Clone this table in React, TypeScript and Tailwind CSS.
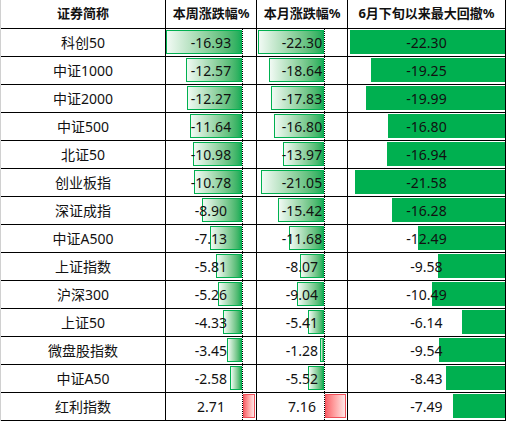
import React from "react";

type Row = { name: string; w: number; m: number; d: number };

const rows: Row[] = [
  { name: "科创50", w: -16.93, m: -22.3, d: -22.3 },
  { name: "中证1000", w: -12.57, m: -18.64, d: -19.25 },
  { name: "中证2000", w: -12.27, m: -17.83, d: -19.99 },
  { name: "中证500", w: -11.64, m: -16.8, d: -16.8 },
  { name: "北证50", w: -10.98, m: -13.97, d: -16.94 },
  { name: "创业板指", w: -10.78, m: -21.05, d: -21.58 },
  { name: "深证成指", w: -8.9, m: -15.42, d: -16.28 },
  { name: "中证A500", w: -7.13, m: -11.68, d: -12.49 },
  { name: "上证指数", w: -5.81, m: -8.07, d: -9.58 },
  { name: "沪深300", w: -5.26, m: -9.04, d: -10.49 },
  { name: "上证50", w: -4.33, m: -5.41, d: -6.14 },
  { name: "微盘股指数", w: -3.45, m: -1.28, d: -9.54 },
  { name: "中证A50", w: -2.58, m: -5.52, d: -8.43 },
  { name: "红利指数", w: 2.71, m: 7.16, d: -7.49 },
];

function AxisBarCell({ v, axis, scale }: { v: number; axis: number; scale: number }) {
  const len = Math.abs(v) * scale;
  const neg = v < 0;
  return (
    <div className="relative h-[28px] border-r border-b border-black flex items-center justify-center">
      {neg ? (
        <div
          className="absolute top-[1px] bottom-[2px] border border-[#00b050] bg-linear-to-r from-[#f1faf4] to-[#12ad58]"
          style={{ left: axis - len, width: len }}
        />
      ) : (
        <div
          className="absolute top-[1px] bottom-[2px] border border-[#f0505a] bg-linear-to-r from-[#f7636b] to-[#ffe6e7]"
          style={{ left: axis + 1, width: len }}
        />
      )}
      <div
        className="absolute top-0 bottom-0 border-l border-dotted border-black"
        style={{ left: axis }}
      />
      <span className="relative">{v.toFixed(2)}</span>
    </div>
  );
}

function SolidBarCell({ v, scale }: { v: number; scale: number }) {
  const len = Math.abs(v) * scale;
  return (
    <div className="relative h-[28px] border-r border-b border-black flex items-center justify-center">
      <div className="absolute top-[1px] bottom-[2px] right-0 bg-[#00b050]" style={{ width: len }} />
      <span className="relative">{v.toFixed(2)}</span>
    </div>
  );
}

export default function App() {
  const head = "h-[29px] border-r border-b border-black flex items-center justify-center font-bold text-[13px]";
  return (
    <div className="bg-white w-[507px] h-[421px] font-['Noto_Sans','Noto_Sans_CJK_SC',sans-serif] text-[14px] text-[#111]">
      <div className="grid grid-cols-[165px_91px_91px_158px] w-[506px] border-l border-[#d0d0d0]">
        <div className={head}>证券简称</div>
        <div className={head}>本周涨跌幅%</div>
        <div className={head}>本月涨跌幅%</div>
        <div className={head}>6月下旬以来最大回撤%</div>
        {rows.map((r) => (
          <React.Fragment key={r.name}>
            <div className="h-[28px] border-r border-b border-black flex items-center justify-center">
              {r.name}
            </div>
            <AxisBarCell v={r.w} axis={76} scale={4.47} />
            <AxisBarCell v={r.m} axis={67} scale={2.97} />
            <SolidBarCell v={r.d} scale={6.95} />
          </React.Fragment>
        ))}
      </div>
    </div>
  );
}
